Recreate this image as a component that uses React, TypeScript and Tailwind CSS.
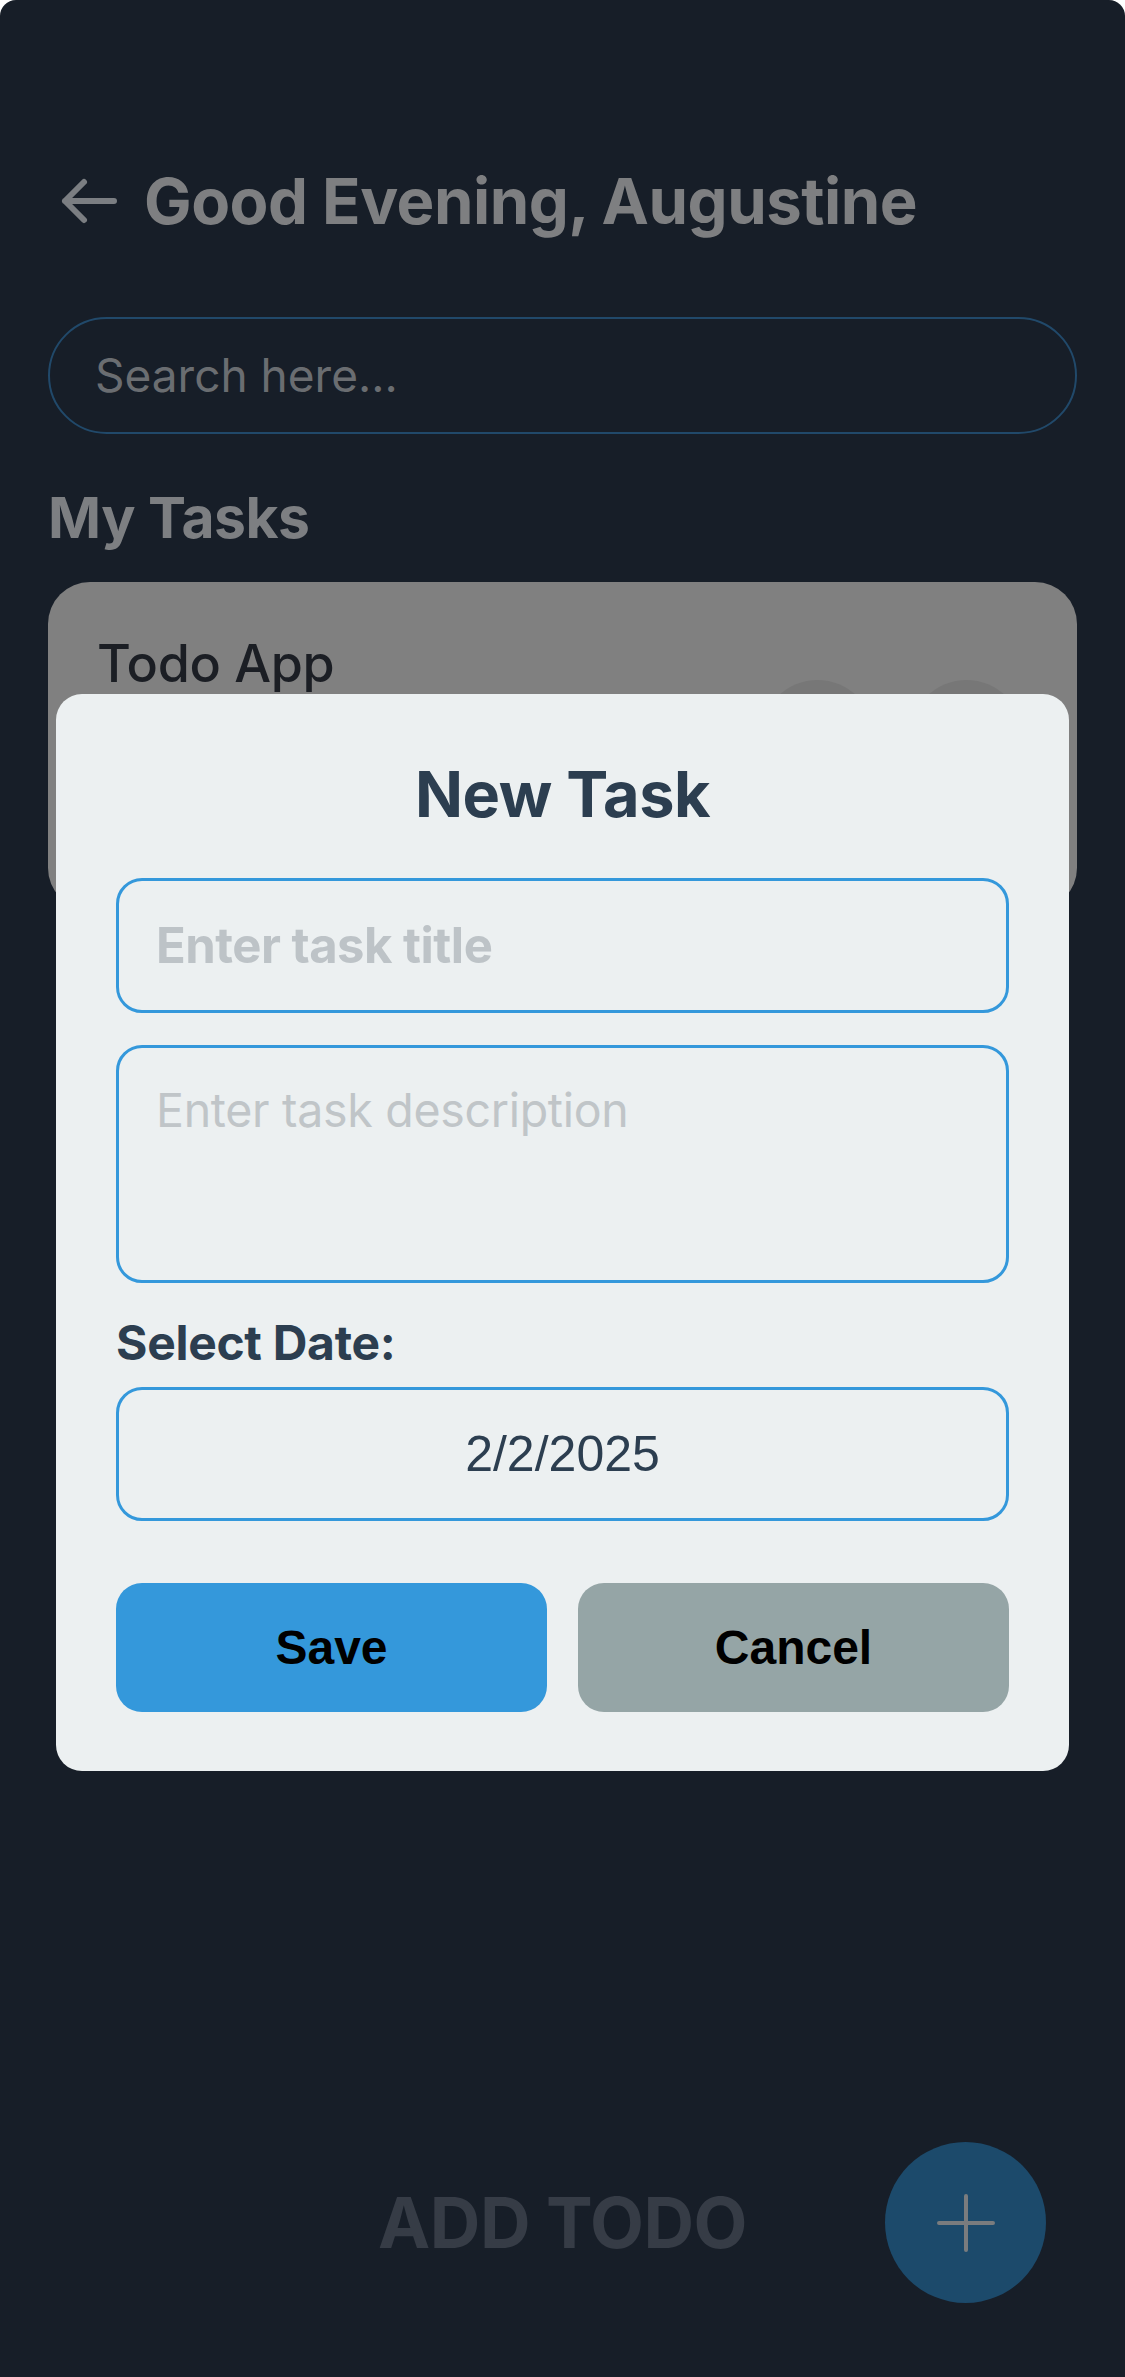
const sf = { fontFamily: 'Inter, "Noto Sans", sans-serif' };
const arial = { fontFamily: '"Liberation Sans", Arial, sans-serif' };

const BackArrow = () => (
  <svg width="58" height="48" viewBox="0 0 58 48" fill="none">
    <path d="M54 24H5M24 5L5 24L24 43" stroke="#7b7e82" strokeWidth="6" strokeLinecap="round" strokeLinejoin="round" />
  </svg>
);

const NewTaskModal = () => {
  return (
    <div className="absolute top-[694px] left-[56px] w-[1013px] rounded-[26px] bg-[#ecf0f1] px-[60px] pt-[60px] pb-[59px]">
      <h2 style={sf} className="text-center text-[63px] leading-[80px] font-bold tracking-[-0.5px] text-[#2c3e50]">
        New Task
      </h2>

      <div className="mt-[44px] h-[135px] rounded-[26px] border-[3px] border-[#3498db] flex items-center px-[37px]">
        <span style={sf} className="text-[49px] font-bold text-[#bdc3c7] tracking-[-0.5px]">Enter task title</span>
      </div>

      <div className="mt-[32px] h-[238px] rounded-[26px] border-[3px] border-[#3498db] px-[37px] pt-[34px]">
        <span style={sf} className="text-[46.5px] leading-[56px] text-[#c0c5c8] tracking-[-0.3px]">Enter task description</span>
      </div>

      <div style={sf} className="mt-[32px] text-[48px] leading-[56px] font-bold text-[#2c3e50] tracking-[-0.3px]">
        Select Date:
      </div>

      <div className="mt-[16px] h-[134px] rounded-[26px] border-[3px] border-[#3498db] flex items-center justify-center">
        <span style={arial} className="text-[50px] text-[#2c3e50]">2/2/2025</span>
      </div>

      <div className="mt-[62px] grid grid-cols-2 gap-[31px]">
        <button style={arial} className="h-[129px] rounded-[26px] bg-[#3498db] text-[48px] font-bold text-black">
          Save
        </button>
        <button style={arial} className="h-[129px] rounded-[26px] bg-[#95a5a6] text-[48px] font-bold text-black">
          Cancel
        </button>
      </div>
    </div>
  );
};

export default function App() {
  return (
    <div className="w-[1125px] h-[2377px] bg-white">
      <div className="relative h-full rounded-t-[16px] bg-[#171e28] px-[48px] flex flex-col">
        <div className="mt-[165px] h-[72px] flex items-center">
          <div className="ml-[12px]">
            <BackArrow />
          </div>
          <h1 style={sf} className="ml-[26px] text-[63.5px] font-bold tracking-[-0.5px] text-[#7e7f81]">
            Good Evening, Augustine
          </h1>
        </div>

        <div className="mt-[80px] h-[117px] rounded-full border-2 border-[#21496a] flex items-center px-[45px]">
          <span style={sf} className="text-[46px] text-[#6a6d71]">Search here...</span>
        </div>

        <h3 style={sf} className="mt-[50px] text-[57px] leading-[68px] font-bold tracking-[-0.5px] text-[#7d7f82]">
          My Tasks
        </h3>

        <div className="mt-[30px] h-[328px] rounded-[42px] bg-[#808080] pl-[49px] pr-[54px] pt-[52px] flex justify-between">
          <span style={sf} className="text-[52px] leading-[60px] font-medium text-[#1b1e24] tracking-[-0.3px]">Todo App</span>
          <div className="mt-[46px] flex gap-[36px]">
            <div className="w-[113px] h-[113px] rounded-full bg-[#777777]" />
            <div className="w-[113px] h-[113px] rounded-full bg-[#777777]" />
          </div>
        </div>

        <div className="mt-auto mb-[74px] relative h-[161px] flex items-center justify-center">
          <span style={sf} className="text-[70px] font-bold text-[#363c46] tracking-[-0.5px]">ADD TODO</span>
          <div className="absolute right-[31px] top-0 w-[161px] h-[161px] rounded-full bg-[#1c4a6b] flex items-center justify-center">
            <svg width="58" height="58" viewBox="0 0 58 58">
              <path d="M29 2V56M2 29H56" stroke="#7a7c7e" strokeWidth="4" strokeLinecap="round" />
            </svg>
          </div>
        </div>

        <NewTaskModal />
      </div>
    </div>
  );
}
